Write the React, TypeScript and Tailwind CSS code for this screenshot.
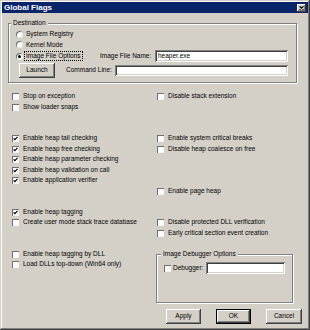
import React from 'react';

// win2000-style bevels
const raised =
  'shadow-[inset_-1px_-1px_#404040,inset_1px_1px_#ffffff,inset_-2px_-2px_#808080]';
const sunken =
  'shadow-[inset_1px_1px_#808080,inset_-1px_-1px_#ffffff,inset_2px_2px_#404040,inset_-2px_-2px_#d4d0c8]';
const etched = 'border border-[#808080] shadow-[inset_1px_1px_#ffffff,1px_1px_#ffffff]';

function Box({ checked = false }: { checked?: boolean }) {
  return (
    <span className="flex h-[7px] w-[7px] shrink-0 items-center justify-center bg-white shadow-[inset_1px_1px_#6f6f6f,inset_-1px_-1px_#f4f4f4]">
      {checked && (
        <svg width="7" height="7" viewBox="0 0 7 7">
          <path d="M1.6 3.3 L2.9 4.7 L5.5 1.9" fill="none" stroke="#000" strokeWidth="1.2" />
        </svg>
      )}
    </span>
  );
}

function Check({ label, checked = false, right = false }: { label: string; checked?: boolean; right?: boolean }) {
  return (
    <div className={`flex h-[10.5px] items-center gap-[4px] ${right ? 'pl-[1px]' : ''}`}>
      <Box checked={checked} />
      <span className="whitespace-nowrap">{label}</span>
    </div>
  );
}

function Radio({ label, selected = false }: { label: string; selected?: boolean }) {
  return (
    <div className="flex h-[10.5px] items-center gap-[3px]">
      <span className="flex h-[7px] w-[7px] shrink-0 items-center justify-center rounded-full bg-white shadow-[inset_1px_1px_#6f6f6f,inset_-1px_-1px_#ececec]">
        {selected && <span className="h-[3px] w-[3px] rounded-full bg-black" />}
      </span>
      <span className="whitespace-nowrap">{label}</span>
    </div>
  );
}

export default function App() {
  return (
    <div
      className={`flex h-[330px] w-[310px] flex-col bg-[#d4d0c8] p-[2px] text-black font-[Liberation_Sans,Arial,sans-serif] shadow-[inset_-1px_-1px_#404040,inset_1px_1px_#d4d0c8,inset_-2px_-2px_#808080,inset_2px_2px_#ffffff]`}
    >
      {/* Title bar */}
      <div className="flex h-[11px] items-center justify-between bg-[#0a246a] px-[2px]">
        <span className="text-[8px] font-bold leading-none text-white">Global Flags</span>
        <span className={`flex h-[8px] w-[9px] items-center justify-center bg-[#d4d0c8] ${raised}`}>
          <svg width="5" height="4" viewBox="0 0 5 4">
            <path d="M0.5 0.3 L4.5 3.7 M4.5 0.3 L0.5 3.7" stroke="#000" strokeWidth="1.1" />
          </svg>
        </span>
      </div>

      <div className="flex flex-col px-[6px] text-[6.5px] leading-none">
        {/* Destination */}
        <fieldset className={`mt-[6px] h-[64px] w-[289px] ${etched}`}>
          <legend className="ml-[2px] bg-[#d4d0c8] px-[2px] leading-[8px]">Destination</legend>
          <div className="mt-[2px] flex flex-col pl-[7px]">
            <Radio label="System Registry" />
            <Radio label="Kernel Mode" />
            <div className="flex h-[12px] items-center">
              <div className="flex w-[84px] items-center gap-[1px]">
                <span className="flex h-[7px] w-[7px] shrink-0 items-center justify-center rounded-full bg-white shadow-[inset_1px_1px_#6f6f6f,inset_-1px_-1px_#ececec]">
                  <span className="h-[3px] w-[3px] rounded-full bg-black" />
                </span>
                <span className="whitespace-nowrap border border-dotted border-black px-[1px] py-[1px]">
                  Image File Options
                </span>
              </div>
              <span className="w-[55px] whitespace-nowrap">Image File Name:</span>
              <div className={`flex h-[12px] w-[133px] items-center bg-white pl-[3px] ${sunken}`}>heaper.exe</div>
            </div>
            <div className="mt-[1px] flex items-center">
              <button className={`ml-[3px] h-[15px] w-[36px] bg-[#d4d0c8] ${raised}`}>Launch</button>
              <span className="ml-[11px] w-[49px] whitespace-nowrap">Command Line:</span>
              <div className={`h-[11px] w-[173px] bg-white ${sunken}`} />
            </div>
          </div>
        </fieldset>

        {/* Flags */}
        <div className="mt-[8.25px] flex pl-[4px]">
          <div className="flex w-[144px] flex-col">
            <Check label="Stop on exception" />
            <Check label="Show loader snaps" />
            <div className="h-[21px]" />
            <Check label="Enable heap tail checking" checked />
            <Check label="Enable heap free checking" checked />
            <Check label="Enable heap parameter checking" checked />
            <Check label="Enable heap validation on call" checked />
            <Check label="Enable application verifier" checked />
            <div className="h-[21px]" />
            <Check label="Enable heap tagging" checked />
            <Check label="Create user mode stack trace database" />
            <div className="h-[21px]" />
            <Check label="Enable heap tagging by DLL" />
            <Check label="Load DLLs top-down (Win64 only)" />
          </div>
          <div className="flex w-[137px] flex-col">
            <Check label="Disable stack extension" right />
            <div className="h-[31.5px]" />
            <Check label="Enable system critical breaks" right />
            <Check label="Disable heap coalesce on free" right />
            <div className="h-[31.5px]" />
            <Check label="Enable page heap" right />
            <div className="h-[21px]" />
            <Check label="Disable protected DLL verification" right />
            <Check label="Early critical section event creation" right />
            <div className="h-[10.5px]" />
            <fieldset className={`mt-[1.25px] h-[53px] w-[137px] ${etched}`}>
              <legend className="ml-[4px] bg-[#d4d0c8] px-[2px] leading-[8px]">Image Debugger Options</legend>
              <div className="mt-[4px] flex h-[12px] items-center pl-[7px]">
                <Box />
                <span className="ml-[2px] w-[33px] whitespace-nowrap">Debugger:</span>
                <div className={`h-[12px] w-[79px] bg-white ${sunken}`} />
              </div>
            </fieldset>
          </div>
        </div>

        {/* Buttons */}
        <div className="mt-[6px] flex justify-end gap-[15px]">
          <button className={`h-[15px] w-[35px] bg-[#d4d0c8] ${raised}`}>Apply</button>
          <button className={`h-[15px] w-[35px] border border-black bg-[#d4d0c8] ${raised}`}>OK</button>
          <button className={`h-[15px] w-[36px] bg-[#d4d0c8] ${raised}`}>Cancel</button>
        </div>
      </div>
    </div>
  );
}
